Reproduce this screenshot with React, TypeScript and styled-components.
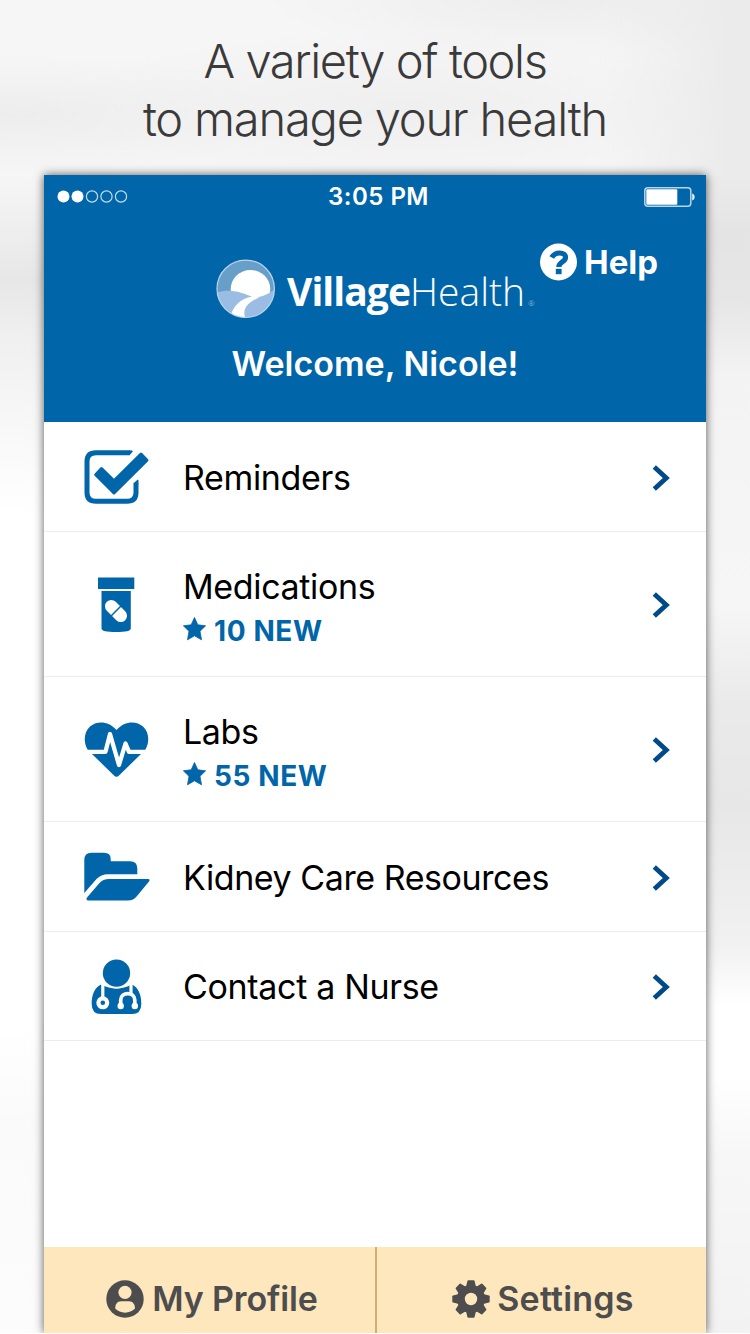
import React from "react";
import styled, { createGlobalStyle } from "styled-components";

const BLUE = "#0065a9";
const GREY = "#4d4d4d";

const GlobalStyle = createGlobalStyle`
  * { box-sizing: border-box; }
  body {
    margin: 0;
    background: #fff;
    font-family: Inter, Roboto, "Liberation Sans", sans-serif;
  }
`;

const Page = styled.main`
  width: 750px;
  height: 1333px;
  overflow: hidden;
  display: flex;
  flex-direction: column;
  align-items: center;
  background:
    linear-gradient(180deg, #f6f6f6 0, #e7e7e7 105px, #f0f0f0 165px, #fbfbfb 290px, #fff 340px, #fff 850px, #fafafa 950px, #fcfcfc 100%) 0 175px / 50% 1158px no-repeat,
    linear-gradient(180deg, #ebebeb 0, #e4e4e4 60px, #e6e6e6 125px, #f3f3f3 200px, #f6f6f6 430px, #eaeaea 530px, #e7e7e7 630px, #f1f1f1 770px, #fff 830px, #fff 900px, #f7f7f7 980px, #f2f2f2 100%) 100% 175px / 50% 1158px no-repeat,
    linear-gradient(90deg, rgba(235, 235, 235, 0) 600px, #ebebeb 730px),
    radial-gradient(ellipse 280px 60px at 20px 115px, rgba(236, 236, 236, 0.9), rgba(236, 236, 236, 0)),
    radial-gradient(ellipse 360px 80px at 400px 110px, rgba(238, 238, 238, 0.9), rgba(238, 238, 238, 0)),
    radial-gradient(ellipse 300px 60px at 560px 0, rgba(236, 236, 236, 0.9), rgba(236, 236, 236, 0)),
    #f6f6f6;
`;

const Headline = styled.h1`
  margin: 0;
  height: 175px;
  padding-top: 32px;
  color: #3a3a3a;
  font-size: 47px;
  font-weight: 300;
  line-height: 58px;
  text-align: center;
  white-space: nowrap;
`;

const HeadlineLine = styled.span<{ $tracking: number }>`
  display: block;
  letter-spacing: ${(p) => p.$tracking}px;
`;

const Phone = styled.section`
  width: 662px;
  height: 1158px;
  flex: none;
  display: flex;
  flex-direction: column;
  background: #fff;
  box-shadow: 0 0 9px rgba(0, 0, 0, 0.65);
`;

const Header = styled.header`
  height: 247px;
  flex: none;
  background: ${BLUE};
  color: #fff;
`;

const StatusBar = styled.div`
  height: 43px;
  padding: 0 11px 0 12px;
  display: grid;
  grid-template-columns: 1fr auto 1fr;
  align-items: center;
  & > :last-child { justify-self: end; }
`;

const Clock = styled.time`
  padding-left: 6px;
  font-size: 24px;
  font-weight: 600;
  line-height: 43px;
  letter-spacing: 0.5px;
`;

const Banner = styled.div`
  height: 110px;
  padding-left: 172px;
  display: flex;
  align-items: flex-start;
`;

const Brand = styled.div`
  width: 318px;
  padding-top: 41px;
  display: flex;
  align-items: flex-start;
  & > svg { flex: none; }
`;

const BrandName = styled.span`
  margin-left: 12px;
  padding-top: 2px;
  font-family: "Open Sans", "Noto Sans", sans-serif;
  font-size: 39px;
  line-height: 60px;
  font-weight: 300;
  white-space: nowrap;
  b { font-weight: 700; letter-spacing: -0.95px; }
  sup { font-size: 8px; vertical-align: baseline; opacity: 0.6; margin-left: 3px; }
`;

const HelpLink = styled.a`
  margin-left: 6px;
  padding-top: 24px;
  display: flex;
  align-items: center;
  gap: 7px;
  font-size: 33px;
  font-weight: 700;
  line-height: 40px;
`;

const Welcome = styled.p`
  margin: 0;
  padding-top: 14px;
  text-align: center;
  font-size: 34px;
  font-weight: 600;
  line-height: 44px;
`;

const Menu = styled.ul`
  list-style: none;
  margin: 0;
  padding: 0;
  flex: 1;
`;

const Row = styled.li<{ $height: number }>`
  height: ${(p) => p.$height}px;
  padding: 2px 36px 0 40px;
  display: flex;
  align-items: center;
  border-bottom: 1.5px solid #ececee;
`;

const IconSlot = styled.div<{ $lift?: number }>`
  width: 66px;
  flex: none;
  padding-bottom: ${(p) => p.$lift ?? 0}px;
  display: flex;
  justify-content: center;
`;

const RowText = styled.div<{ $offset: number }>`
  flex: 1;
  padding: ${(p) => p.$offset}px 0 0 33px;
`;

const Label = styled.div<{ $tracking: number }>`
  color: #000;
  font-size: 34px;
  line-height: 44px;
  white-space: nowrap;
  letter-spacing: ${(p) => p.$tracking}px;
`;

const Badge = styled.div`
  padding-top: 1px;
  display: flex;
  align-items: center;
  gap: 8px;
  color: ${BLUE};
  font-size: 28px;
  font-weight: 700;
  line-height: 42px;
  letter-spacing: 0.6px;
  & > svg { margin-top: -4px; }
`;

const Tabs = styled.nav`
  height: 86px;
  display: grid;
  grid-template-columns: 332px 330px;
  background: #fee6bd;
`;

const Tab = styled.a`
  padding: 17px 0 0 4px;
  display: flex;
  align-items: center;
  justify-content: center;
  gap: 8px;
  color: ${GREY};
  font-size: 34px;
  font-weight: 600;
  line-height: 40px;
  letter-spacing: -0.15px;
  & + & {
    padding-left: 3px;
    gap: 7px;
    border-left: 2px solid #d2ad76;
    margin-left: -1px;
    letter-spacing: 0.2px;
  }
`;

const Signal = () => (
  <svg width="74" height="14" viewBox="0 0 74 14">
    {[7.5, 21.5, 36, 50.5, 65].map((x, i) => (
      <circle key={x} cx={x} cy="6.5" r={i < 2 ? 6 : 5.6} fill={i < 2 ? "#fff" : "none"} stroke={i < 2 ? "none" : "#c4dcec"} strokeWidth="1.2" />
    ))}
  </svg>
);

const Battery = () => (
  <svg width="51" height="20" viewBox="0 0 51 20">
    <rect x="0.8" y="0.8" width="46" height="18.4" rx="3" fill="none" stroke="#b7d5e9" strokeWidth="1.5" />
    <rect x="2.3" y="2.3" width="31" height="15.4" rx="1" fill="#fff" />
    <path d="M48.2 6.5c3.2.6 3.2 6.4 0 7z" fill="#e5f0f7" />
  </svg>
);

const Logo = () => (
  <svg width="59" height="60" viewBox="215.5 259 59 60">
    <clipPath id="disc"><circle cx="245.2" cy="288.8" r="28.7" /></clipPath>
    <g clipPath="url(#disc)">
      <rect x="215" y="259" width="60" height="60" fill="#689fc9" />
      <ellipse cx="250" cy="289" rx="19.8" ry="19" fill="#fff" />
      <path d="M215 293C228 288 241 292 252 297C262 298 267 294 275 289V320H215Z" fill="#9bbde3" />
      <path d="M252 296.5C239 299 232 306 229 320H246C240 310 247 302 259 297.5Z" fill="#fff" />
    </g>
    <circle cx="245.2" cy="288.8" r="28.7" fill="none" stroke="#b8d5ec" strokeWidth="1.2" />
  </svg>
);

const HelpIcon = () => (
  <svg width="37" height="38" viewBox="539.5 243 37 38">
    <circle cx="558" cy="262" r="18.5" fill="#fff" />
    <path d="M551.3 257.4C554.5 251.5 565 251.5 565 257.4C565 262 558.3 261.7 558.3 267" fill="none" stroke={BLUE} strokeWidth="5.2" />
    <rect x="555.3" y="268.8" width="5.8" height="5.4" fill={BLUE} />
  </svg>
);

const CheckIcon = () => (
  <svg width="66" height="56" viewBox="84 449 66 56">
    <path d="M130 452.7H96Q87 452.7 87 461.5V492.5Q87 501.3 96 501.3H127Q136 501.3 136 492.5V483.5" fill="none" stroke={BLUE} strokeWidth="5" />
    <path d="M129.5 450.2Q132.8 450.2 132.8 451.6L129.5 455.2Z" fill={BLUE} />
    <path d="M133.5 484V483.3L137.5 479.8Q138.5 479.5 138.5 481V484Z" fill={BLUE} />
    <path d="M101.5 468.5L114 480.8L141 454L147 460.2L114 493L95.7 474.7Z" fill={BLUE} stroke={BLUE} strokeWidth="3" strokeLinejoin="round" />
  </svg>
);

const PillsIcon = () => (
  <svg width="38" height="56" viewBox="98 577 38 56">
    <rect x="98" y="577.5" width="36.3" height="11.5" fill={BLUE} />
    <path d="M101.5 591H130.8V628.5Q130.8 632 116 632Q101.5 632 101.5 628.5Z" fill={BLUE} />
    <g transform="rotate(45 116 611)">
      <rect x="103" y="604.7" width="26" height="12.6" rx="6.3" fill="#fff" />
      <rect x="115.3" y="604" width="1.5" height="14" fill={BLUE} />
    </g>
  </svg>
);

const HeartIcon = () => (
  <svg width="66" height="56" viewBox="84 721.5 66 56">
    <path d="M116.5 729.5C125 719.5 137 720.5 143 726C149.5 732 149.5 742 145.5 749L140 754.5L119 775Q116.5 777.5 114 775L93 754.5L87.5 749C83.5 742 83.5 732 90 726C96 720.5 108 719.5 116.5 729.5Z" fill={BLUE} />
    <path d="M83 751.3H105.5L110 733.5L119 764.5L125.5 743L129 751.3H151" fill="none" stroke="#fff" strokeWidth="4.3" strokeLinejoin="round" />
  </svg>
);

const FolderIcon = () => (
  <svg width="66" height="50" viewBox="84 852 66 50">
    <path d="M84.3 893V860Q84.3 852.8 91.5 852.8H104Q110.7 852.8 110.7 859V861.3H130Q137.3 861.3 137.3 868.5V874.3H108Q101 874.3 96.5 879Z" fill={BLUE} />
    <path d="M87 897.5L99.5 883Q103 879 109 879H148Q150.5 879 149 881.5L137 896Q133.5 900.6 128 900.6H88.5Q85.5 900.6 87 897.5Z" fill={BLUE} />
  </svg>
);

const NurseIcon = () => (
  <svg width="52" height="56" viewBox="91 958.5 52 56">
    <path d="M101 984C94 987.5 91.7 995 91.7 1003.5Q91.7 1013.5 101 1013.5H132Q141.3 1013.5 141.3 1003.5C141.3 995 139 987.5 132 984Q116.5 992 101 984Z" fill={BLUE} />
    <circle cx="116.5" cy="972.6" r="15.3" fill="#fff" />
    <circle cx="116.5" cy="972.6" r="13.7" fill={BLUE} />
    <g fill="none" stroke="#fff" strokeWidth="3.2">
      <path d="M102.8 983V997" />
      <path d="M131 983V993" />
      <path d="M120.7 1004.5V999.5C120.7 991 134.8 991 134.8 999.5V1004.5" strokeWidth="3.7" />
      <circle cx="102.8" cy="1002.3" r="4.4" strokeWidth="4.2" />
    </g>
    <circle cx="120.7" cy="1005.5" r="3.2" fill="#fff" />
    <circle cx="134.8" cy="1005.5" r="3.2" fill="#fff" />
  </svg>
);

const StarIcon = () => (
  <svg width="23" height="24" viewBox="0 0 23 24">
    <path d="M11.5 0.5L14.8 7.8L22.6 8.8L17 14.3L18.5 22.8L11.5 18.8L4.5 22.8L6 14.3L0.4 8.8L8.2 7.8Z" fill={BLUE} stroke={BLUE} strokeWidth="0.8" strokeLinejoin="round" />
  </svg>
);

const Chevron = () => (
  <svg width="18" height="26" viewBox="0 0 18 26">
    <path d="M2.3 2L14.3 13L2.3 24" fill="none" stroke="#004b87" strokeWidth="4.8" />
  </svg>
);

const ProfileIcon = () => (
  <svg width="38" height="38" viewBox="107 1279.5 38 38">
    <circle cx="126" cy="1298.5" r="18.7" fill={GREY} />
    <circle cx="126" cy="1291.8" r="6.6" fill="#fee6bd" />
    <path d="M116.2 1308C116.2 1303.5 118.5 1300.7 122 1300.7H130C133.5 1300.7 136 1303.5 136 1308C131 1313.5 121 1313.5 116.2 1308Z" fill="#fee6bd" />
  </svg>
);

const GearIcon = () => (
  <svg width="38" height="38" viewBox="-19 -19 38 38">
    <g fill={GREY}>
      <circle r="14" />
      {[0, 45, 90, 135, 180, 225, 270, 315].map((a) => (
        <path key={a} transform={`rotate(${a})`} d="M-5 -12L-3.6 -18Q-3.4 -18.7 -2.7 -18.7H2.7Q3.4 -18.7 3.6 -18L5 -12Z" />
      ))}
    </g>
    <circle r="6.2" fill="#fee6bd" />
  </svg>
);

const items = [
  { label: "Reminders", icon: <CheckIcon />, height: 110, tracking: -0.35, offset: 1, lift: 2 },
  { label: "Medications", icon: <PillsIcon />, height: 145, tracking: -0.35, offset: 6, badge: "10 NEW" },
  { label: "Labs", icon: <HeartIcon />, height: 145, tracking: -0.35, offset: 6, lift: 1, badge: "55 NEW" },
  { label: "Kidney Care Resources", icon: <FolderIcon />, height: 110, tracking: -0.43, offset: 0, lift: 2 },
  { label: "Contact a Nurse", icon: <NurseIcon />, height: 109, tracking: -0.33, offset: 0 },
];

export default function App() {
  return (
    <>
      <GlobalStyle />
      <Page>
        <Headline>
          <HeadlineLine $tracking={-1.4}>A variety of tools</HeadlineLine>
          <HeadlineLine $tracking={-1.2}>to manage your health</HeadlineLine>
        </Headline>
        <Phone>
          <Header>
            <StatusBar>
              <Signal />
              <Clock>3:05 PM</Clock>
              <Battery />
            </StatusBar>
            <Banner>
              <Brand>
                <Logo />
                <BrandName><b>Village</b>Health<sup>®</sup></BrandName>
              </Brand>
              <HelpLink><HelpIcon />Help</HelpLink>
            </Banner>
            <Welcome>Welcome, Nicole!</Welcome>
          </Header>
          <Menu>
            {items.map((item) => (
              <Row key={item.label} $height={item.height}>
                <IconSlot $lift={item.lift}>{item.icon}</IconSlot>
                <RowText $offset={item.offset}>
                  <Label $tracking={item.tracking}>{item.label}</Label>
                  {item.badge && <Badge><StarIcon />{item.badge}</Badge>}
                </RowText>
                <Chevron />
              </Row>
            ))}
          </Menu>
          <Tabs>
            <Tab><ProfileIcon />My Profile</Tab>
            <Tab><GearIcon />Settings</Tab>
          </Tabs>
        </Phone>
      </Page>
    </>
  );
}
